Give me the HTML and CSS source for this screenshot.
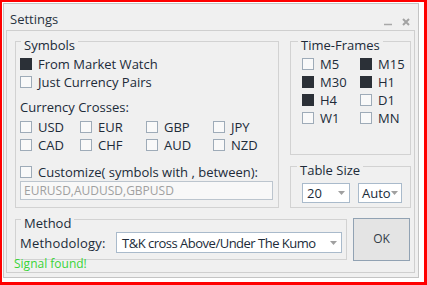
FILE: index.html
```html
<!DOCTYPE html>
<html lang="en">
<head>
    <meta charset="UTF-8">
    <meta name="viewport" content="width=device-width, initial-scale=1.0">
    <title>Settings</title>
    <link rel="stylesheet" href="styles.css">
</head>
<body>
    <div class="frame">
        <div class="window">
            <div class="titlebar">
                <span class="title">Settings</span>
                <span class="controls">
                    <svg width="8" height="8" viewBox="0 0 8 8"><path d="M0 6.5H8" stroke="#a8a8a8" stroke-width="1.5"/></svg>
                    <svg width="8" height="8" viewBox="0 0 8 8"><path d="M1 1L7 7M7 1L1 7" stroke="#a3a3a3" stroke-width="2"/></svg>
                </span>
            </div>

            <div class="client">
                <div class="row top-row">
                    <fieldset class="group symbols">
                        <legend>Symbols</legend>
                        <label class="check"><span class="box on"></span>From Market Watch</label>
                        <label class="check"><span class="box"></span>Just Currency Pairs</label>
                        <p class="caption">Currency Crosses:</p>
                        <div class="crosses">
                            <label class="check"><span class="box"></span>USD</label>
                            <label class="check"><span class="box"></span>EUR</label>
                            <label class="check"><span class="box"></span>GBP</label>
                            <label class="check"><span class="box"></span>JPY</label>
                            <label class="check"><span class="box"></span>CAD</label>
                            <label class="check"><span class="box"></span>CHF</label>
                            <label class="check"><span class="box"></span>AUD</label>
                            <label class="check"><span class="box"></span>NZD</label>
                        </div>
                        <label class="check custom"><span class="box"></span>Customize( symbols with , between):</label>
                        <div class="textbox">EURUSD,AUDUSD,GBPUSD</div>
                    </fieldset>

                    <div class="side">
                        <fieldset class="group frames">
                            <legend>Time-Frames</legend>
                            <div class="frame-grid">
                                <label class="check"><span class="box"></span>M5</label>
                                <label class="check"><span class="box on"></span>M15</label>
                                <label class="check"><span class="box on"></span>M30</label>
                                <label class="check"><span class="box on"></span>H1</label>
                                <label class="check"><span class="box on"></span>H4</label>
                                <label class="check"><span class="box"></span>D1</label>
                                <label class="check"><span class="box"></span>W1</label>
                                <label class="check"><span class="box"></span>MN</label>
                            </div>
                        </fieldset>

                        <fieldset class="group table-size">
                            <legend>Table Size</legend>
                            <div class="combos">
                                <div class="combo size-combo"><span>20</span><svg width="7" height="4" viewBox="0 0 7 4"><path d="M0 0H7L3.5 4Z" fill="#a0a0a0"/></svg></div>
                                <div class="combo auto-combo"><span>Auto</span><svg width="7" height="4" viewBox="0 0 7 4"><path d="M0 0H7L3.5 4Z" fill="#a0a0a0"/></svg></div>
                            </div>
                        </fieldset>
                    </div>
                </div>

                <div class="row bottom-row">
                    <fieldset class="group method">
                        <legend>Method</legend>
                        <div class="method-line">
                            <span class="method-label">Methodology:</span>
                            <div class="combo method-combo"><span>T&amp;K cross Above/Under The Kumo</span><svg width="7" height="4" viewBox="0 0 7 4"><path d="M0 0H7L3.5 4Z" fill="#a0a0a0"/></svg></div>
                        </div>
                    </fieldset>
                    <button class="ok">OK</button>
                </div>

                <p class="status">Signal found!</p>
            </div>
        </div>
    </div>
</body>
</html>
```

FILE: styles.css
```css
body {
    margin: 0;
    font-family: "Open Sans", "Noto Sans", sans-serif;
    font-size: 13px;
    color: #202b39;
}

.frame {
    width: 427px;
    height: 285px;
    box-sizing: border-box;
    border: 2px solid #ff0000;
    border-right-width: 3px;
    border-bottom-width: 3px;
    background-color: #fff;
    padding: 1px 0 0 1px;
}

.window {
    width: 416px;
    height: 275px;
    box-sizing: border-box;
    border: 1px solid #c4c4c4;
    background-color: #f0f0f0;
    display: flex;
    flex-direction: column;
}

.titlebar {
    height: 26px;
    flex-shrink: 0;
    box-sizing: border-box;
    display: flex;
    justify-content: space-between;
    align-items: flex-start;
    padding: 4px 8px 0 6px;
}

.title {
    line-height: 22px;
    color: #283340;
}

.controls {
    display: flex;
    gap: 10px;
    margin-top: 10px;
}

.controls svg {
    display: block;
}

.client {
    flex: 1;
    margin: 0 3px 4px 2px;
    border: 1px solid #cfcfcf;
}

.row {
    display: flex;
    padding-left: 8px;
}

.top-row {
    justify-content: space-between;
    align-items: flex-start;
    padding-right: 3px;
}

.group {
    margin: 0;
    border: 1px solid #d2d2d2;
    min-width: 0;
}

.group legend {
    padding: 7px 3px 0;
    margin-left: 1px;
    line-height: 14px;
}

.symbols {
    width: 264px;
    box-sizing: border-box;
    padding: 3px 4px 7px 4px;
}

.check {
    display: flex;
    align-items: center;
    gap: 6px;
    height: 18px;
    white-space: nowrap;
}

.box {
    width: 12px;
    height: 12px;
    box-sizing: border-box;
    border: 1px solid #9eabb8;
    background-color: #f9f9f9;
    flex-shrink: 0;
}

.box.on {
    background-color: #2b3037;
    border-color: #2b3037;
}

.caption {
    margin: 7px 0 0;
    line-height: 18px;
}

.crosses {
    display: grid;
    grid-template-columns: 60px 66px 67px 1fr;
    margin-top: 2px;
}

.custom {
    margin-top: 9px;
}

.textbox {
    height: 19px;
    width: 253px;
    box-sizing: border-box;
    border: 1px solid #bcc5ce;
    background-color: #f8f8f8;
    padding-left: 3px;
    font-size: 12px;
    line-height: 17px;
    color: #a0a0a0;
}

.side {
    width: 121px;
    display: flex;
    flex-direction: column;
}

.frames {
    padding: 3px 0 27px 7px;
}

.frames legend {
    margin-left: 0;
}

.frame-grid {
    display: grid;
    grid-template-columns: 58px 58px;
    margin-left: 4px;
}

.table-size {
    margin-top: 1px;
    padding: 6px 0 4px 6px;
}

.table-size legend {
    margin-left: 0;
}

.combos {
    display: flex;
    gap: 8px;
    margin-left: 5px;
}

.combo {
    height: 20px;
    box-sizing: border-box;
    border: 1px solid #a9bacb;
    background-color: #fff;
    display: flex;
    align-items: center;
    justify-content: space-between;
    padding: 0 4px;
    line-height: 18px;
    white-space: nowrap;
}

.size-combo {
    width: 48px;
}

.auto-combo {
    width: 44px;
    padding: 0 3px;
}

.bottom-row {
    margin-top: 1px;
    gap: 6px;
    align-items: flex-start;
}

.method {
    width: 332px;
    box-sizing: border-box;
    padding: 2px 4px 6px 4px;
}

.method-line {
    display: flex;
    align-items: center;
}

.method-label {
    width: 96px;
    letter-spacing: 0.2px;
}

.method-combo {
    width: 226px;
    height: 21px;
    padding: 0 4px 0 5px;
    letter-spacing: -0.5px;
}

.ok {
    margin-top: 9px;
    width: 57px;
    height: 43px;
    border: 1px solid #91a2b3;
    background-color: #e4e4e4;
    font-family: "Open Sans", "Noto Sans", sans-serif;
    font-size: 12px;
    color: #333c47;
    padding: 0 0 3px;
}

.status {
    margin: -4px 0 0 7px;
    font-size: 12px;
    line-height: 14px;
    color: #38d438;
}
```
